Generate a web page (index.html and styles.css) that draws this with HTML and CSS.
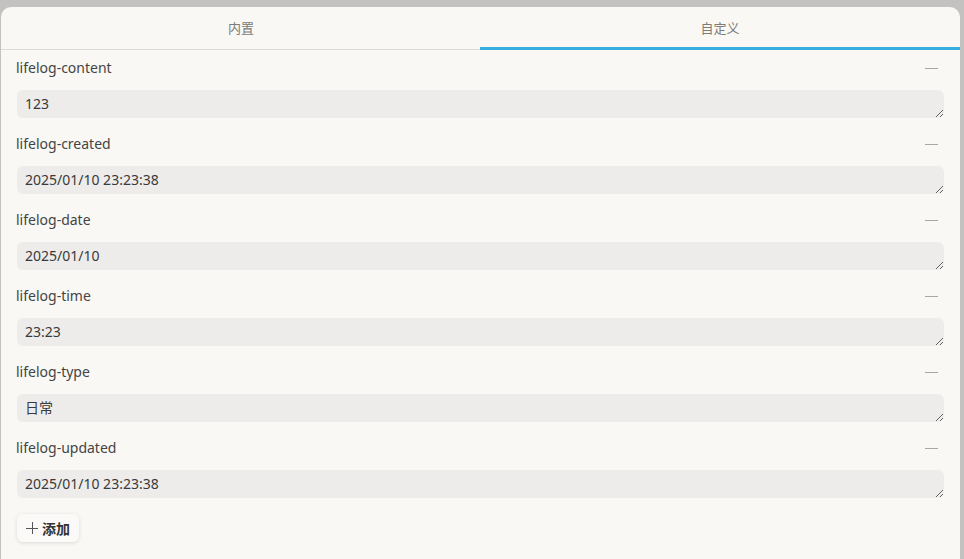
FILE: index.html
```html
<!DOCTYPE html>
<html lang="zh">
<head>
<meta charset="utf-8">
<title>属性</title>
<link rel="stylesheet" href="styles.css">
</head>
<body>
<div class="panel">
  <div class="tabs">
    <div class="tab">内置</div>
    <div class="tab active">自定义</div>
  </div>
  <div class="content">
    <div class="field">
      <div class="field-head"><span class="label">lifelog-content</span><span class="remove"></span></div>
      <textarea class="value" rows="1">123</textarea>
    </div>
    <div class="field">
      <div class="field-head"><span class="label">lifelog-created</span><span class="remove"></span></div>
      <textarea class="value" rows="1">2025/01/10 23:23:38</textarea>
    </div>
    <div class="field">
      <div class="field-head"><span class="label">lifelog-date</span><span class="remove"></span></div>
      <textarea class="value" rows="1">2025/01/10</textarea>
    </div>
    <div class="field">
      <div class="field-head"><span class="label">lifelog-time</span><span class="remove"></span></div>
      <textarea class="value" rows="1">23:23</textarea>
    </div>
    <div class="field">
      <div class="field-head"><span class="label">lifelog-type</span><span class="remove"></span></div>
      <textarea class="value" rows="1">日常</textarea>
    </div>
    <div class="field">
      <div class="field-head"><span class="label">lifelog-updated</span><span class="remove"></span></div>
      <textarea class="value" rows="1">2025/01/10 23:23:38</textarea>
    </div>
    <button class="add"><span class="plus"></span><span>添加</span></button>
  </div>
</div>
</body>
</html>
```
FILE: styles.css
```css
html, body {
  margin: 0;
  padding: 0;
  height: 100%;
  overflow: hidden;
}
body {
  background: #c3c2c0;
  font-family: "Noto Sans", "Noto Sans CJK SC", sans-serif;
  color: #333;
  padding: 7px 4px 0 1px;
  box-sizing: border-box;
}
.panel {
  background: #f9f8f5;
  border-radius: 10px 10px 0 0;
  height: 100%;
  overflow: hidden;
}
.tabs {
  display: flex;
  height: 42px;
  border-bottom: 1px solid #dcdbd8;
}
.tab {
  flex: 1;
  display: flex;
  align-items: center;
  justify-content: center;
  font-size: 13px;
  color: #7c7b79;
  font-family: "Noto Sans CJK SC", sans-serif;
  padding-bottom: 2px;
  box-sizing: border-box;
}
.tab.active {
  border-bottom: 3px solid #37ade2;
  margin-bottom: -1px;
  margin-left: -1px;
  padding-bottom: 0;
}
.content {
  padding: 7px 16px 0 15px;
  display: flex;
  flex-direction: column;
}
.field {
  display: flex;
  flex-direction: column;
  margin-bottom: 15px;
}
.field-head {
  display: flex;
  align-items: center;
  justify-content: space-between;
  height: 20px;
  margin-bottom: 13px;
}
.label {
  font-size: 14px;
  color: #444;
}
.remove {
  width: 13px;
  height: 1.5px;
  background: #a8a7a5;
  margin-right: 6px;
  margin-top: 3px;
}
.value {
  display: block;
  height: 28px;
  margin-left: 1px;
  box-sizing: border-box;
  border: none;
  border-radius: 6px;
  background: #edecea;
  padding: 4px 8px;
  font-family: "Noto Sans", "Noto Sans CJK SC", sans-serif;
  font-size: 14px;
  line-height: 20px;
  color: #3a3a3a;
  resize: vertical;
  outline: none;
}
.add {
  align-self: flex-start;
  margin-left: 1px;
  margin-top: 1px;
  display: flex;
  align-items: center;
  gap: 4px;
  height: 28px;
  padding: 0 9px 0 9px;
  border: none;
  border-radius: 6px;
  background: #fbfaf8;
  box-shadow: 0 1px 4px rgba(0, 0, 0, 0.12);
  font-family: "Noto Sans CJK SC", sans-serif;
  font-size: 14px;
  font-weight: 700;
  color: #333;
}
.plus {
  position: relative;
  width: 12px;
  height: 12px;
}
.plus::before, .plus::after {
  content: "";
  position: absolute;
  background: #555;
}
.plus::before {
  left: 0;
  top: 5.5px;
  width: 12px;
  height: 1.2px;
}
.plus::after {
  top: 0;
  left: 5.5px;
  width: 1.2px;
  height: 12px;
}
```
